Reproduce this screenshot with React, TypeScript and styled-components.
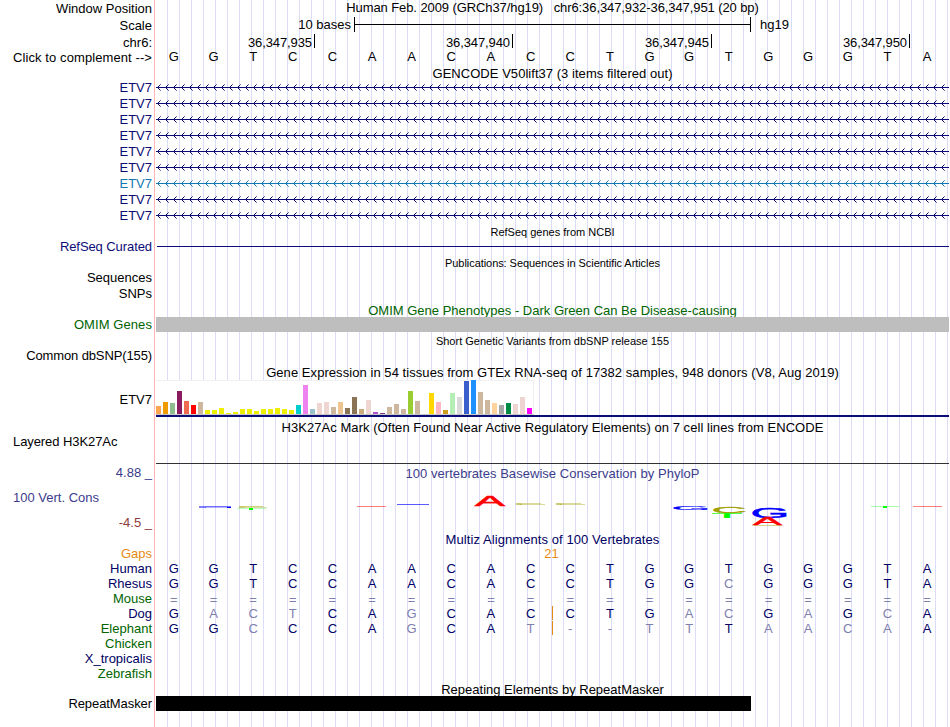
import React from "react";
import styled, { createGlobalStyle } from "styled-components";

const GlobalStyle = createGlobalStyle`
  * { box-sizing: border-box; }
  body { margin: 0; background: #fff; }
`;

const NAVY = "#0c0c78";
const SKY = "#1478b4";
const GREEN = "#006400";
const DEEP = "#000064";
const FADED = "#8080b0";
const ORANGE = "#e68a14";

const Browser = styled.main`
  width: 949px;
  height: 727px;
  overflow: hidden;
  font-family: "Liberation Sans", Arial, Helvetica, sans-serif;
  font-size: 13px;
  line-height: 16px;
  color: #000;
  white-space: pre;
  background:
    linear-gradient(#ffb4b4, #ffb4b4) 154px 0 / 1px 100% no-repeat,
    repeating-linear-gradient(to right, #dcdcf8 0 1px, transparent 1px 12px) 167px 0 / 782px 100% no-repeat,
    #fff;
`;

const Row = styled.section<{ $h: number }>`
  display: grid;
  grid-template-columns: 152px 793px;
  column-gap: 4px;
  height: ${(p) => p.$h}px;
`;

/* $b is the distance from the top of the row to the text baseline. */
const Label = styled.div<{ $b: number; $color?: string; $left?: boolean; $track?: number }>`
  height: 16px;
  margin-top: ${(p) => p.$b - 12}px;
  padding-left: ${(p) => (p.$left ? 13 : 0)}px;
  text-align: ${(p) => (p.$left ? "left" : "right")};
  letter-spacing: ${(p) => p.$track ?? 0}px;
  color: ${(p) => p.$color ?? "#000"};
`;

const Title = styled.h2<{ $b: number; $color?: string; $small?: boolean; $track?: number }>`
  grid-column: 2;
  height: 16px;
  margin: ${(p) => p.$b - 12}px 0 0;
  font-size: ${(p) => (p.$small ? 11 : 13)}px;
  font-weight: 400;
  text-align: center;
  letter-spacing: ${(p) => p.$track ?? 0}px;
  color: ${(p) => p.$color ?? "#000"};
`;

const ScaleTrack = styled.div`
  display: flex;
  align-items: flex-start;
`;
const ScaleText = styled.span<{ $w?: number }>`
  width: ${(p) => (p.$w ? `${p.$w}px` : "auto")};
  padding-right: 3px;
  text-align: right;
`;
const ScaleBar = styled.div`
  width: 397px;
  height: 15px;
  margin-right: 9px;
  border: solid #000;
  border-width: 0 1px;
  background: linear-gradient(#000, #000) 0 7px / 100% 1px no-repeat;
`;

const Ticks = styled.div`
  display: flex;
`;
const Tick = styled.span<{ $w: number }>`
  width: ${(p) => p.$w}px;
  height: 14px;
  padding-right: 2px;
  border-right: 1px solid #000;
  line-height: 17px;
  letter-spacing: -0.1px;
  text-align: right;
`;

const BaseStrip = styled.div<{ $b: number }>`
  display: grid;
  grid-template-columns: repeat(20, 39.65px);
  height: 16px;
  margin: ${(p) => p.$b - 12}px 0 0 -2px;
  text-align: center;
`;
const Base = styled.span<{ $color: string; $low: boolean }>`
  padding-top: ${(p) => (p.$low ? 1 : 0)}px;
  color: ${(p) => p.$color};
`;

const GeneSvg = styled.svg`
  display: block;
  width: 793px;
  height: 16px;
`;
const Rule = styled.div<{ $top: number; $color: string; $inset?: number }>`
  height: 1px;
  margin-top: ${(p) => p.$top}px;
  margin-left: ${(p) => p.$inset ?? 0}px;
  background: ${(p) => p.$color};
`;
const Block = styled.div<{ $w: number; $color: string }>`
  width: ${(p) => p.$w}px;
  height: 15px;
  background: ${(p) => p.$color};
`;

const Expression = styled.div`
  height: 37px;
  border-bottom: 2px solid ${NAVY};
`;
const Bars = styled.div`
  display: flex;
  align-items: flex-end;
  gap: 2px;
  width: 378px;
  height: 35px;
  background: #fff;
  border: solid #f0f0f0;
  border-width: 1px 1px 0 0;
  border-bottom: 1px solid #c8c8c8;
`;
const Bar = styled.i<{ $h: number; $color: string }>`
  flex: none;
  width: 5px;
  height: ${(p) => p.$h}px;
  background: ${(p) => p.$color};
`;

const Conservation = styled.div`
  display: flex;
  flex-direction: column;
  gap: 8px;
`;
const LogoSvg = styled.svg`
  display: block;
  width: 793px;
  height: 40px;
`;
const GapCell = styled.div<{ $b: number }>`
  width: 791px;
  margin-top: ${(p) => p.$b - 12}px;
  text-align: center;
  color: ${ORANGE};
`;
const Alignment = styled.div<{ $gap?: boolean }>`
  background: ${(p) =>
    p.$gap ? `linear-gradient(${ORANGE}, ${ORANGE}) 396px 0 / 1px 14px no-repeat` : "none"};
`;

const SEQUENCE = "GGTCCAACACCTGGTGGGTA";

const GENE_COLORS = [NAVY, NAVY, NAVY, NAVY, NAVY, NAVY, SKY, NAVY, NAVY];

const TAN = "#cdb79e";
const YELLOW = "#eeee00";
const ROSE = "#eed5d2";
const EXPRESSION: [number, string][] = [
  [8, "#ffa54f"], [12, "#ee9a00"], [11, "#8fbc8f"], [23, "#8b1c62"], [13, "#ee6a50"],
  [9, "#ff0000"], [12, TAN], [4, YELLOW], [4, YELLOW], [6, YELLOW], [1, YELLOW],
  [2, YELLOW], [5, YELLOW], [5, YELLOW], [3, YELLOW], [5, YELLOW], [5, YELLOW],
  [6, YELLOW], [5, YELLOW], [4, YELLOW], [9, "#00cdcd"], [29, "#ee82ee"],
  [5, "#9ac0cd"], [11, ROSE], [12, ROSE], [7, TAN], [12, "#eec591"], [6, "#8b7355"],
  [17, "#8b7355"], [5, "#cdaa7d"], [14, ROSE], [2, "#b452cd"], [1, "#7a378b"],
  [7, TAN], [10, TAN], [5, TAN], [23, "#9acd32"], [13, TAN], [0, "#7a67ee"],
  [21, "#ffd700"], [12, "#ffb6c1"], [4, "#cd9b1d"], [21, "#b4eeb4"], [17, "#d9d9d9"],
  [33, "#3a5fcd"], [34, "#1e90ff"], [22, TAN], [14, TAN], [11, "#ffd39b"],
  [9, "#a6a6a6"], [11, "#008b45"], [10, ROSE], [17, ROSE], [6, "#ff00ff"],
];

/* letter, left, top, width, height; measured from the plot's top-left corner */
const LOGO: [string, number, number, number, number][] = [
  ["A", 319, 6, 30, 10],
  ["G", 518, 16, 33, 4],
  ["C", 558, 16, 31, 7],
  ["T", 557, 23, 28, 5],
  ["G", 597, 17, 33, 11],
  ["A", 597, 28, 29, 7],
];
const LOGO_COLOR: Record<string, string> = { A: "#ff0000", C: "#a0a000", G: "#0000ff", T: "#00ff00" };
/* ink box of each capital in em: left, width, bottom, height */
const INK: Record<string, [number, number, number, number]> = {
  A: [0.003, 0.661, 0, 0.688],
  C: [0.05, 0.637, 0.01, 0.708],
  G: [0.05, 0.662, 0.01, 0.708],
  T: [0.021, 0.568, 0, 0.688],
};
/* scores near zero flatten to streaks: base, left, top, width, height, opacity */
const STREAKS: [string, number, number, number, number, number][] = [
  ["G", 43, 16, 7, 2, 0.5], ["G", 50, 16, 25, 1, 0.55], ["G", 49, 17, 22, 1, 0.3], ["G", 71, 17, 4, 1, 1],
  ["C", 83, 16, 6, 2, 0.55], ["C", 89, 16, 18, 1, 0.5], ["C", 89, 17, 22, 1, 0.35],
  ["T", 81, 18, 29, 1, 0.25], ["T", 93, 18, 4, 2, 1],
  ["A", 201, 16, 29, 1, 0.5],
  ["G", 241, 14, 32, 1, 0.65],
  ["C", 360, 13, 6, 2, 0.55], ["C", 366, 13, 19, 1, 0.4], ["C", 364, 14, 25, 1, 0.4],
  ["C", 400, 13, 6, 2, 0.55], ["C", 406, 13, 19, 1, 0.4], ["C", 404, 14, 25, 1, 0.4],
  ["C", 598, 35, 28, 1, 0.45],
  ["T", 715, 16, 28, 1, 0.35], ["T", 727, 16, 4, 2, 1],
  ["A", 757, 16, 29, 1, 0.5],
];

/* Lower-case letters are bases that differ from the reference genome. */
const SPECIES: { name: string; color: string; bases?: string; gap?: boolean }[] = [
  { name: "Human", color: DEEP, bases: "GGTCCAACACCTGGTGGGTA" },
  { name: "Rhesus", color: DEEP, bases: "GGTCCAACACCTGGcGGGTA" },
  { name: "Mouse", color: GREEN, bases: "====================" },
  { name: "Dog", color: DEEP, bases: "GactCAgCACCTGacGaGcA", gap: true },
  { name: "Elephant", color: GREEN, bases: "GGcCCAgCAt--ttTaacaA", gap: true },
  { name: "Chicken", color: GREEN },
  { name: "X_tropicalis", color: DEEP },
  { name: "Zebrafish", color: GREEN },
];

function Gene({ color }: { color: string }) {
  let arms = "";
  let ends = "";
  for (let x = 1; x < 793; x += 8) {
    arms += `M${x + 1} 6.5h1M${x + 1} 8.5h1M${x + 2} 5.5h1M${x + 2} 9.5h1`;
    ends += `M${x + 3} 4.5h1M${x + 3} 10.5h1`;
  }
  return (
    <GeneSvg viewBox="0 0 793 16" fill="none" stroke={color}>
      <path d="M0 7.5H793" />
      <path d={arms} />
      <path d={ends} strokeOpacity="0.6" />
    </GeneSvg>
  );
}

function Logo() {
  return (
    <LogoSvg viewBox="0 0 793 40" fontSize="20">
      {STREAKS.map(([c, x, y, w, h, o], i) => (
        <rect key={i} x={x} y={y} width={w} height={h} fill={LOGO_COLOR[c]} opacity={o} />
      ))}
      {LOGO.map(([c, x, y, w, h], i) => {
        const [left, width, bottom, height] = INK[c];
        const sx = w / (width * 20);
        const sy = h / (height * 20);
        return (
          <text
            key={i}
            fill={LOGO_COLOR[c]}
            stroke={LOGO_COLOR[c]}
            strokeWidth="0.6"
            transform={`translate(${x - left * 20 * sx} ${y + h - bottom * 20 * sy}) scale(${sx} ${sy})`}
          >
            {c}
          </text>
        );
      })}
    </LogoSvg>
  );
}

function Bases({ seq, b, color }: { seq: string; b: number; color: string }) {
  return (
    <BaseStrip $b={b}>
      {[...seq].map((c, i) => (
        <Base key={i} $color={/[A-Z]/.test(c) ? color : FADED} $low={c === "="}>
          {c.toUpperCase()}
        </Base>
      ))}
    </BaseStrip>
  );
}

export default function App() {
  return (
    <>
      <GlobalStyle />
      <Browser>
        <Row $h={17}>
          <Label $b={13}>Window Position</Label>
          <Title $b={12} $track={-0.09}>{"Human Feb. 2009 (GRCh37/hg19)   chr6:36,347,932-36,347,951 (20 bp)"}</Title>
        </Row>
        <Row $h={17}>
          <Label $b={13}>Scale</Label>
          <ScaleTrack>
            <ScaleText $w={198}>10 bases</ScaleText>
            <ScaleBar />
            <ScaleText>hg19</ScaleText>
          </ScaleTrack>
        </Row>
        <Row $h={15}>
          <Label $b={13}>chr6:</Label>
          <Ticks>
            <Tick $w={159}>36,347,935</Tick>
            <Tick $w={198}>36,347,940</Tick>
            <Tick $w={199}>36,347,945</Tick>
            <Tick $w={198}>36,347,950</Tick>
          </Ticks>
        </Row>
        <Row $h={17}>
          <Label $b={13} $track={0.09}>Click to complement --&gt;</Label>
          <Bases seq={SEQUENCE} b={12} color="#000" />
        </Row>

        <Row $h={14}>
          <Title $b={12} $track={0.04}>GENCODE V50lift37 (3 items filtered out)</Title>
        </Row>
        {GENE_COLORS.map((color, i) => (
          <Row $h={16} key={i}>
            <Label $b={12} $color={color}>ETV7</Label>
            <Gene color={color} />
          </Row>
        ))}

        <Row $h={15}>
          <Title $b={12} $small>RefSeq genes from NCBI</Title>
        </Row>
        <Row $h={16}>
          <Label $b={12} $color={NAVY} $track={-0.08}>RefSeq Curated</Label>
          <Rule $top={7} $color={NAVY} $inset={1} />
        </Row>

        <Row $h={15}>
          <Title $b={12} $small $track={-0.06}>Publications: Sequences in Scientific Articles</Title>
        </Row>
        <Row $h={16}><Label $b={12}>Sequences</Label></Row>
        <Row $h={16}><Label $b={12}>SNPs</Label></Row>

        <Row $h={15}>
          <Title $b={13} $color={GREEN}>OMIM Gene Phenotypes - Dark Green Can Be Disease-causing</Title>
        </Row>
        <Row $h={15}>
          <Label $b={12} $color={GREEN} $track={0.08}>OMIM Genes</Label>
          <Block $w={793} $color="#bebebe" />
        </Row>

        <Row $h={16}>
          <Title $b={13} $small>Short Genetic Variants from dbSNP release 155</Title>
        </Row>
        <Row $h={16}><Label $b={12} $track={-0.12}>Common dbSNP(155)</Label></Row>

        <Row $h={16}>
          <Title $b={13} $track={0.06}>Gene Expression in 54 tissues from GTEx RNA-seq of 17382 samples, 948 donors (V8, Aug 2019)</Title>
        </Row>
        <Row $h={37}>
          <Label $b={24}>ETV7</Label>
          <Expression>
            <Bars>
              {EXPRESSION.map(([h, color], i) => <Bar key={i} $h={h} $color={color} />)}
            </Bars>
          </Expression>
        </Row>

        <Row $h={17}>
          <Title $b={15} $track={0.05}>H3K27Ac Mark (Often Found Near Active Regulatory Elements) on 7 cell lines from ENCODE</Title>
        </Row>
        <Row $h={30}>
          <Label $b={12} $left $track={-0.08}>Layered H3K27Ac</Label>
          <Rule $top={29} $color="#323232" />
        </Row>

        <Row $h={68}>
          <div>
            <Label $b={13} $color="#3c3c8c">4.88 _</Label>
            <Label $b={21} $color="#3c3c8c" $left>100 Vert. Cons</Label>
            <Label $b={21} $color="#8c3c3c">-4.5 _</Label>
          </div>
          <Conservation>
            <Title $b={14} $color="#3c3c8c" $track={0.04}>100 vertebrates Basewise Conservation by PhyloP</Title>
            <Logo />
          </Conservation>
        </Row>

        <Row $h={14}>
          <Title $b={12} $color={DEEP} $track={0.08}>Multiz Alignments of 100 Vertebrates</Title>
        </Row>
        <Row $h={15}>
          <Label $b={12} $color={ORANGE}>Gaps</Label>
          <GapCell $b={12}>21</GapCell>
        </Row>
        {SPECIES.map((s) => (
          <Row $h={15} key={s.name}>
            <Label $b={12} $color={s.color}>{s.name}</Label>
            <Alignment $gap={s.gap}>
              {s.bases && <Bases seq={s.bases} b={12} color={DEEP} />}
            </Alignment>
          </Row>
        ))}

        <Row $h={15}>
          <Title $b={13}>Repeating Elements by RepeatMasker</Title>
        </Row>
        <Row $h={15}>
          <Label $b={12} $track={-0.08}>RepeatMasker</Label>
          <Block $w={595} $color="#000" />
        </Row>
      </Browser>
    </>
  );
}
